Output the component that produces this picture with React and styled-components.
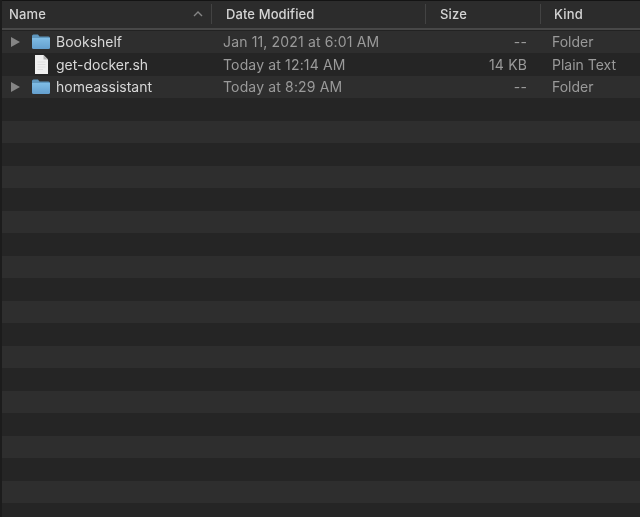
import styled, { createGlobalStyle } from 'styled-components';

const GlobalStyle = createGlobalStyle`
  html, body {
    margin: 0;
    padding: 0;
    background: #262626;
  }
`;

const Window = styled.div`
  width: 640px;
  height: 517px;
  overflow: hidden;
  background: #262626;
  border-left: 2px solid #1c1c1c;
  box-sizing: border-box;
  font-family: "Inter", "Liberation Sans", sans-serif;
  filter: blur(0.35px);
`;

const HeaderBar = styled.div`
  display: grid;
  grid-template-columns: 210px 214px 115px 1fr;
  height: 30.5px;
  box-sizing: border-box;
  background: linear-gradient(#2c2c2c 0 27px, #484848 27px 29px, #222 29px);
  border-top: 1px solid #141414;
  padding: 2px 0 5px;
`;

const HeaderCell = styled.div`
  display: flex;
  align-items: center;
  justify-content: space-between;
  padding: 0 8px 0 ${(p) => p.$pad}px;
  border-right: ${(p) => (p.$last ? 'none' : '1px solid #434343')};
  margin: 1px 0 2px;
  font-size: 13px;
  font-weight: 500;
  letter-spacing: ${(p) => p.$spacing ?? 0.2}px;
  color: #d4d4d4;
`;

const Row = styled.div`
  display: grid;
  grid-template-columns: 210px 214px 115px 1fr;
  align-items: center;
  height: 22.5px;
  font-size: 14px;
  letter-spacing: 0.15px;
  color: #9a9a9a;
  background: ${(p) => (p.$odd ? '#2e2e2e' : '#252525')};
`;

const NameCell = styled.div`
  display: flex;
  align-items: center;
  padding-left: 9px;
  letter-spacing: 0;
`;

const Arrow = styled.div`
  width: 0;
  height: 0;
  border-left: 9px solid #858585;
  border-top: 5px solid transparent;
  border-bottom: 5px solid transparent;
  visibility: ${(p) => (p.$hidden ? 'hidden' : 'visible')};
`;

const IconSlot = styled.div`
  display: flex;
  justify-content: center;
  width: 20px;
  margin: 0 5px 0 11px;
`;

const FileName = styled.span`
  color: #d8d8d8;
  font-size: 14px;
`;

const DateCell = styled.div`
  padding-left: 11px;
`;

const SizeCell = styled.div`
  padding-right: 14px;
  text-align: right;
`;

const KindCell = styled.div`
  padding-left: 11px;
  letter-spacing: 0;
`;

const FolderIcon = () => (
  <svg width="18" height="15" viewBox="0 0 18 15">
    <defs>
      <linearGradient id="folderBody" x1="0" y1="0" x2="0" y2="1">
        <stop offset="0" stopColor="#7fbce4" />
        <stop offset="1" stopColor="#649fce" />
      </linearGradient>
    </defs>
    <path d="M0 2 Q0 0.5 1.5 0.5 H6 L7.5 2.5 H16.5 Q18 2.5 18 4 V6 H0 Z" fill="#5f97be" />
    <path d="M0 4 H18 V13.5 Q18 15 16.5 15 H1.5 Q0 15 0 13.5 Z" fill="url(#folderBody)" />
  </svg>
);

const DocIcon = () => (
  <svg width="13" height="19" viewBox="0 0 13 19">
    <path d="M0 0 H8.5 L13 4.5 V19 H0 Z" fill="#f0f0f0" />
    <path d="M8.5 0 V4.5 H13 Z" fill="#b5b5b5" />
    <path d="M2.5 7 H10.5 M2.5 9.5 H10.5 M2.5 12 H10.5 M2.5 14.5 H8" stroke="#dcdcdc" strokeWidth="0.8" />
  </svg>
);

const Sort = () => (
  <svg width="10" height="6" viewBox="0 0 10 6">
    <path d="M1 5 L5 1 L9 5" fill="none" stroke="#858585" strokeWidth="1.4" />
  </svg>
);

const files = [
  { name: 'Bookshelf', date: 'Jan 11, 2021 at 6:01 AM', size: '--', kind: 'Folder', folder: true },
  { name: 'get-docker.sh', date: 'Today at 12:14 AM', size: '14 KB', kind: 'Plain Text', folder: false },
  { name: 'homeassistant', date: 'Today at 8:29 AM', size: '--', kind: 'Folder', folder: true },
];

const rowCount = 22;

const App = () => {
  const rows = Array.from({ length: rowCount }, (_, i) => files[i] || null);
  return (
    <>
      <GlobalStyle />
      <Window>
        <HeaderBar>
          <HeaderCell $pad={7}>
            Name
            <Sort />
          </HeaderCell>
          <HeaderCell $pad={14} $spacing={0.1}>Date Modified</HeaderCell>
          <HeaderCell $pad={14}>Size</HeaderCell>
          <HeaderCell $pad={13} $last>Kind</HeaderCell>
        </HeaderBar>
        {rows.map((file, i) => (
          <Row key={i} $odd={i % 2 === 0}>
            {file && (
              <>
                <NameCell>
                  <Arrow $hidden={!file.folder} />
                  <IconSlot>{file.folder ? <FolderIcon /> : <DocIcon />}</IconSlot>
                  <FileName>{file.name}</FileName>
                </NameCell>
                <DateCell>{file.date}</DateCell>
                <SizeCell>{file.size}</SizeCell>
                <KindCell>{file.kind}</KindCell>
              </>
            )}
          </Row>
        ))}
      </Window>
    </>
  );
};

export default App;
